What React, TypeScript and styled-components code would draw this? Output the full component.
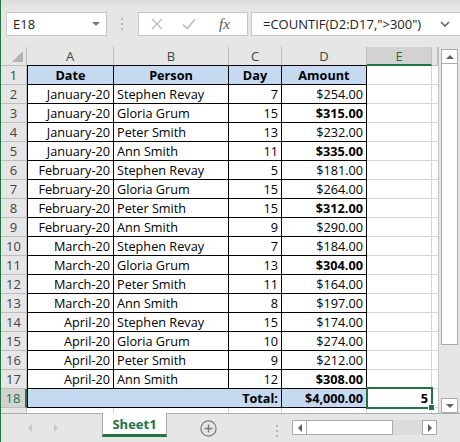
import styled, { createGlobalStyle } from "styled-components";

const GlobalStyle = createGlobalStyle`
  html, body {
    margin: 0;
    padding: 0;
    background: #e6e6e6;
  }
  body {
    font-family: "Open Sans", "Noto Sans", sans-serif;
  }
`;

interface Entry {
  date: string;
  person: string;
  day: number;
  amount: number;
}

const entries: Entry[] = [
  { date: "January-20", person: "Stephen Revay", day: 7, amount: 254 },
  { date: "January-20", person: "Gloria Grum", day: 15, amount: 315 },
  { date: "January-20", person: "Peter Smith", day: 13, amount: 232 },
  { date: "January-20", person: "Ann Smith", day: 11, amount: 335 },
  { date: "February-20", person: "Stephen Revay", day: 5, amount: 181 },
  { date: "February-20", person: "Gloria Grum", day: 15, amount: 264 },
  { date: "February-20", person: "Peter Smith", day: 15, amount: 312 },
  { date: "February-20", person: "Ann Smith", day: 9, amount: 290 },
  { date: "March-20", person: "Stephen Revay", day: 7, amount: 184 },
  { date: "March-20", person: "Gloria Grum", day: 13, amount: 304 },
  { date: "March-20", person: "Peter Smith", day: 11, amount: 164 },
  { date: "March-20", person: "Ann Smith", day: 8, amount: 197 },
  { date: "April-20", person: "Stephen Revay", day: 15, amount: 174 },
  { date: "April-20", person: "Gloria Grum", day: 10, amount: 274 },
  { date: "April-20", person: "Peter Smith", day: 9, amount: 212 },
  { date: "April-20", person: "Ann Smith", day: 12, amount: 308 },
];

const money = (n: number) =>
  "$" + n.toLocaleString("en-US", { minimumFractionDigits: 2, maximumFractionDigits: 2 });

const COLS = { rowHead: 26, a: 87, b: 115, c: 53, d: 85, e: 65, f: 6 };
const GREEN = "#217346";

const Window = styled.div`
  width: 460px;
  height: 442px;
  box-sizing: border-box;
  border-left: 1px solid ${GREEN};
  background: #e6e6e6;
  display: flex;
  flex-direction: column;
  overflow: hidden;
`;

/* ---------- formula bar ---------- */

const FormulaBar = styled.div`
  height: 47px;
  flex-shrink: 0;
  box-sizing: border-box;
  display: flex;
  align-items: flex-start;
  padding: 12px 0 0 5px;
  background: linear-gradient(#dadada 0, #e6e6e6 9px);
`;

const NameBox = styled.div`
  width: 101px;
  height: 24px;
  box-sizing: border-box;
  background: #fff;
  border: 1px solid #c6c6c6;
  display: flex;
  align-items: center;
  justify-content: space-between;
  padding: 0 6px;
  font-size: 13px;
  color: #222;
`;

const DropTriangle = styled.span`
  width: 0;
  height: 0;
  border-left: 4px solid transparent;
  border-right: 4px solid transparent;
  border-top: 4px solid #777;
`;

const Grip = styled.div`
  width: 31px;
  height: 24px;
  display: flex;
  align-items: center;
  justify-content: center;
`;

const FxBox = styled.div`
  width: 110px;
  height: 24px;
  box-sizing: border-box;
  background: #fff;
  border: 1px solid #c6c6c6;
  display: flex;
  align-items: center;
  padding-left: 12px;
  gap: 19px;
`;

const FxLabel = styled.span`
  font-family: "Liberation Serif", serif;
  font-style: italic;
  font-size: 15px;
  color: #555;
  margin-left: 4px;
`;

const FormulaInput = styled.div`
  flex: 1;
  height: 24px;
  box-sizing: border-box;
  margin-left: 3px;
  background: #fff;
  border: 1px solid #c6c6c6;
  border-right: none;
  display: flex;
  align-items: center;
  justify-content: space-between;
  padding: 0 10px 0 11px;
  font-size: 13px;
  color: #222;
`;

/* ---------- sheet ---------- */

const SheetArea = styled.div`
  display: flex;
  height: 366px;
  flex-shrink: 0;
`;

const Grid = styled.div`
  width: 437px;
  overflow: hidden;
  background: #fff;
`;

const Row = styled.div`
  display: flex;
  height: 19px;
`;

const Corner = styled.div`
  width: ${COLS.rowHead}px;
  flex-shrink: 0;
  box-sizing: border-box;
  background: #e6e6e6;
  border-right: 1px solid #bdbdbd;
  border-bottom: 1px solid #bdbdbd;
  position: relative;

  &::after {
    content: "";
    position: absolute;
    right: 3px;
    bottom: 3px;
    width: 0;
    height: 0;
    border-left: 11px solid transparent;
    border-bottom: 11px solid #b4b4b4;
  }
`;

const ColHead = styled.div<{ $w: number; $selected?: boolean; $table?: boolean }>`
  width: ${(p) => p.$w}px;
  flex-shrink: 0;
  box-sizing: border-box;
  background: ${(p) => (p.$selected ? "#d2d2d2" : "#e6e6e6")};
  border-right: 1px solid #bdbdbd;
  border-bottom: ${(p) =>
    p.$selected ? `2px solid ${GREEN}` : p.$table ? "1px solid #000" : "1px solid #bdbdbd"};
  color: ${(p) => (p.$selected ? GREEN : "#444")};
  font-size: 13px;
  line-height: 18px;
  text-align: center;
`;

const RowHead = styled.div<{ $selected?: boolean }>`
  width: ${COLS.rowHead}px;
  flex-shrink: 0;
  box-sizing: border-box;
  background: ${(p) => (p.$selected ? "#d2d2d2" : "#e6e6e6")};
  border-right: ${(p) => (p.$selected ? `2px solid ${GREEN}` : "1px solid #bdbdbd")};
  border-bottom: 1px solid #bdbdbd;
  color: ${(p) => (p.$selected ? GREEN : "#444")};
  font-size: 13px;
  line-height: 18px;
  text-align: center;
`;

interface CellProps {
  $w: number;
  $align?: "left" | "right" | "center";
  $bold?: boolean;
  $fill?: boolean;
  $table?: boolean;
  $first?: boolean;
}

const Cell = styled.div<CellProps>`
  width: ${(p) => p.$w}px;
  flex-shrink: 0;
  box-sizing: border-box;
  position: relative;
  padding: 0 3px;
  background: ${(p) => (p.$fill ? "#c5d9f1" : "#fff")};
  border-left: ${(p) => (p.$first ? "1px solid #000" : "none")};
  border-right: 1px solid ${(p) => (p.$table ? "#000" : "#d4d4d4")};
  border-bottom: 1px solid ${(p) => (p.$table ? "#000" : "#d4d4d4")};
  color: #000;
  font-size: 12.7px;
  line-height: 18px;
  font-weight: ${(p) => (p.$bold ? 700 : 400)};
  text-align: ${(p) => p.$align ?? "left"};
  white-space: nowrap;
  overflow: visible;
`;

const Selection = styled.div`
  position: absolute;
  z-index: 2;
  top: -2px;
  left: -1px;
  width: 67px;
  height: 22px;
  box-sizing: border-box;
  border: 2px solid ${GREEN};
  pointer-events: none;
`;

const FillHandle = styled.div`
  position: absolute;
  right: -4px;
  bottom: -4px;
  width: 7px;
  height: 7px;
  box-sizing: border-box;
  background: ${GREEN};
  border: 1px solid #fff;
`;

/* ---------- scrollbars ---------- */

const VScroll = styled.div`
  width: 22px;
  box-sizing: border-box;
  border-left: 1px solid #c6c6c6;
  background: #e6e6e6;
  padding: 2px 2px 0 2px;
  display: flex;
  flex-direction: column;
`;

const ArrowButton = styled.div<{ $w: number; $h: number }>`
  width: ${(p) => p.$w}px;
  height: ${(p) => p.$h}px;
  flex-shrink: 0;
  box-sizing: border-box;
  background: #fff;
  border: 1px solid #ababab;
  display: flex;
  align-items: center;
  justify-content: center;
`;

const VThumb = styled.div`
  height: 281px;
  flex-shrink: 0;
  box-sizing: border-box;
  background: #fff;
  border: 1px solid #ababab;
  border-top: none;
`;

const Spacer = styled.div`
  flex: 1;
`;

const TabBar = styled.div`
  flex: 1;
  box-sizing: border-box;
  border-top: 1px solid #ababab;
  background: #e6e6e6;
  display: flex;
  align-items: flex-start;
`;

const NavArea = styled.div`
  width: 101px;
  height: 28px;
  display: flex;
  align-items: center;
  padding-left: 27px;
  gap: 22px;
  box-sizing: border-box;
`;

const SheetTab = styled.div`
  width: 65px;
  height: 24px;
  margin-top: -1px;
  box-sizing: border-box;
  background: #fff;
  border-left: 1px solid #ababab;
  border-right: 1px solid #ababab;
  border-bottom: 3px solid ${GREEN};
  color: ${GREEN};
  font-size: 13px;
  font-weight: 700;
  text-align: center;
  line-height: 22px;
`;

const PlusButton = styled.div`
  margin: 6px 0 0 33px;
  width: 17px;
  height: 17px;
`;

const DotGrip = styled.div`
  margin: 7px 0 0 59px;
  width: 3px;
  height: 14px;
`;

const HScroll = styled.div`
  margin: 6px 0 0 13px;
  width: 145px;
  height: 15px;
  display: flex;
  background: #dcdcdc;
`;

const HThumb = styled.div`
  width: 86px;
  box-sizing: border-box;
  background: #fff;
  border: 1px solid #ababab;
  border-left: none;
`;

/* ---------- small drawings ---------- */

const Tri = ({ dir, color = "#606060" }: { dir: "up" | "down" | "left" | "right"; color?: string }) => {
  const pts = {
    up: "0,4 4,0 8,4",
    down: "0,0 8,0 4,4",
    left: "4,0 4,8 0,4",
    right: "0,0 0,8 4,4",
  }[dir];
  const vertical = dir === "up" || dir === "down";
  return (
    <svg width={vertical ? 8 : 4} height={vertical ? 4 : 8} viewBox={vertical ? "0 0 8 4" : "0 0 4 8"}>
      <polygon points={pts} fill={color} />
    </svg>
  );
};

const DotsIcon = () => (
  <svg width="3" height="14" viewBox="0 0 3 14">
    {[1, 6, 11].map((y) => (
      <rect key={y} x="0" y={y} width="2" height="2" fill="#b4b4b4" />
    ))}
  </svg>
);

export default function App() {
  return (
    <>
      <GlobalStyle />
      <Window>
        <FormulaBar>
          <NameBox>
            <span>E18</span>
            <DropTriangle />
          </NameBox>
          <Grip>
            <DotsIcon />
          </Grip>
          <FxBox>
            <svg width="12" height="12" viewBox="0 0 12 12">
              <path d="M1 1 L11 11 M11 1 L1 11" stroke="#bdbdbd" strokeWidth="1.4" />
            </svg>
            <svg width="14" height="12" viewBox="0 0 14 12">
              <path d="M1 6.5 L5 10.5 L13 1.5" stroke="#bdbdbd" strokeWidth="1.6" fill="none" />
            </svg>
            <FxLabel>fx</FxLabel>
          </FxBox>
          <FormulaInput>
            <span>=COUNTIF(D2:D17,"&gt;300")</span>
            <svg width="10" height="6" viewBox="0 0 10 6">
              <path d="M1 1 L5 5 L9 1" stroke="#666" strokeWidth="1.6" fill="none" />
            </svg>
          </FormulaInput>
        </FormulaBar>

        <SheetArea>
          <Grid>
            <Row>
              <Corner />
              <ColHead $w={COLS.a} $table>A</ColHead>
              <ColHead $w={COLS.b} $table>B</ColHead>
              <ColHead $w={COLS.c} $table>C</ColHead>
              <ColHead $w={COLS.d} $table>D</ColHead>
              <ColHead $w={COLS.e} $selected>E</ColHead>
              <ColHead $w={COLS.f} />
            </Row>

            <Row>
              <RowHead>1</RowHead>
              <Cell $w={COLS.a} $first $table $fill $bold $align="center">Date</Cell>
              <Cell $w={COLS.b} $table $fill $bold $align="center">Person</Cell>
              <Cell $w={COLS.c} $table $fill $bold $align="center">Day</Cell>
              <Cell $w={COLS.d} $table $fill $bold $align="center">Amount</Cell>
              <Cell $w={COLS.e} />
              <Cell $w={COLS.f} />
            </Row>

            {entries.map((e, i) => (
              <Row key={i}>
                <RowHead>{i + 2}</RowHead>
                <Cell $w={COLS.a} $first $table $align="right">{e.date}</Cell>
                <Cell $w={COLS.b} $table>{e.person}</Cell>
                <Cell $w={COLS.c} $table $align="right">{e.day}</Cell>
                <Cell $w={COLS.d} $table $align="right" $bold={e.amount > 300}>
                  {money(e.amount)}
                </Cell>
                <Cell $w={COLS.e} />
                <Cell $w={COLS.f} />
              </Row>
            ))}

            <Row>
              <RowHead $selected>18</RowHead>
              <Cell $w={COLS.a + COLS.b + COLS.c} $first $table $fill $bold $align="right">
                Total:
              </Cell>
              <Cell $w={COLS.d} $table $fill $bold $align="right">
                {money(entries.reduce((s, e) => s + e.amount, 0))}
              </Cell>
              <Cell $w={COLS.e} $bold $align="right">
                {entries.filter((e) => e.amount > 300).length}
                <Selection>
                  <FillHandle />
                </Selection>
              </Cell>
              <Cell $w={COLS.f} />
            </Row>

            <Row>
              <RowHead />
              <Cell $w={COLS.a} />
              <Cell $w={COLS.b} />
              <Cell $w={COLS.c} />
              <Cell $w={COLS.d} />
              <Cell $w={COLS.e} />
              <Cell $w={COLS.f} />
            </Row>
          </Grid>

          <VScroll>
            <ArrowButton $w={17} $h={15}>
              <Tri dir="up" />
            </ArrowButton>
            <VThumb />
            <Spacer />
            <ArrowButton $w={17} $h={15}>
              <Tri dir="down" />
            </ArrowButton>
          </VScroll>
        </SheetArea>

        <TabBar>
          <NavArea>
            <Tri dir="left" color="#c6c6c6" />
            <Tri dir="right" color="#c6c6c6" />
          </NavArea>
          <SheetTab>Sheet1</SheetTab>
          <PlusButton>
            <svg width="17" height="17" viewBox="0 0 17 17">
              <circle cx="8.5" cy="8.5" r="7.6" stroke="#7a7a7a" strokeWidth="1.2" fill="none" />
              <path d="M8.5 4.5 V12.5 M4.5 8.5 H12.5" stroke="#7a7a7a" strokeWidth="1.4" />
            </svg>
          </PlusButton>
          <DotGrip>
            <DotsIcon />
          </DotGrip>
          <HScroll>
            <ArrowButton $w={15} $h={15}>
              <Tri dir="left" />
            </ArrowButton>
            <HThumb />
            <Spacer />
            <ArrowButton $w={15} $h={15}>
              <Tri dir="right" />
            </ArrowButton>
          </HScroll>
        </TabBar>
      </Window>
    </>
  );
}
